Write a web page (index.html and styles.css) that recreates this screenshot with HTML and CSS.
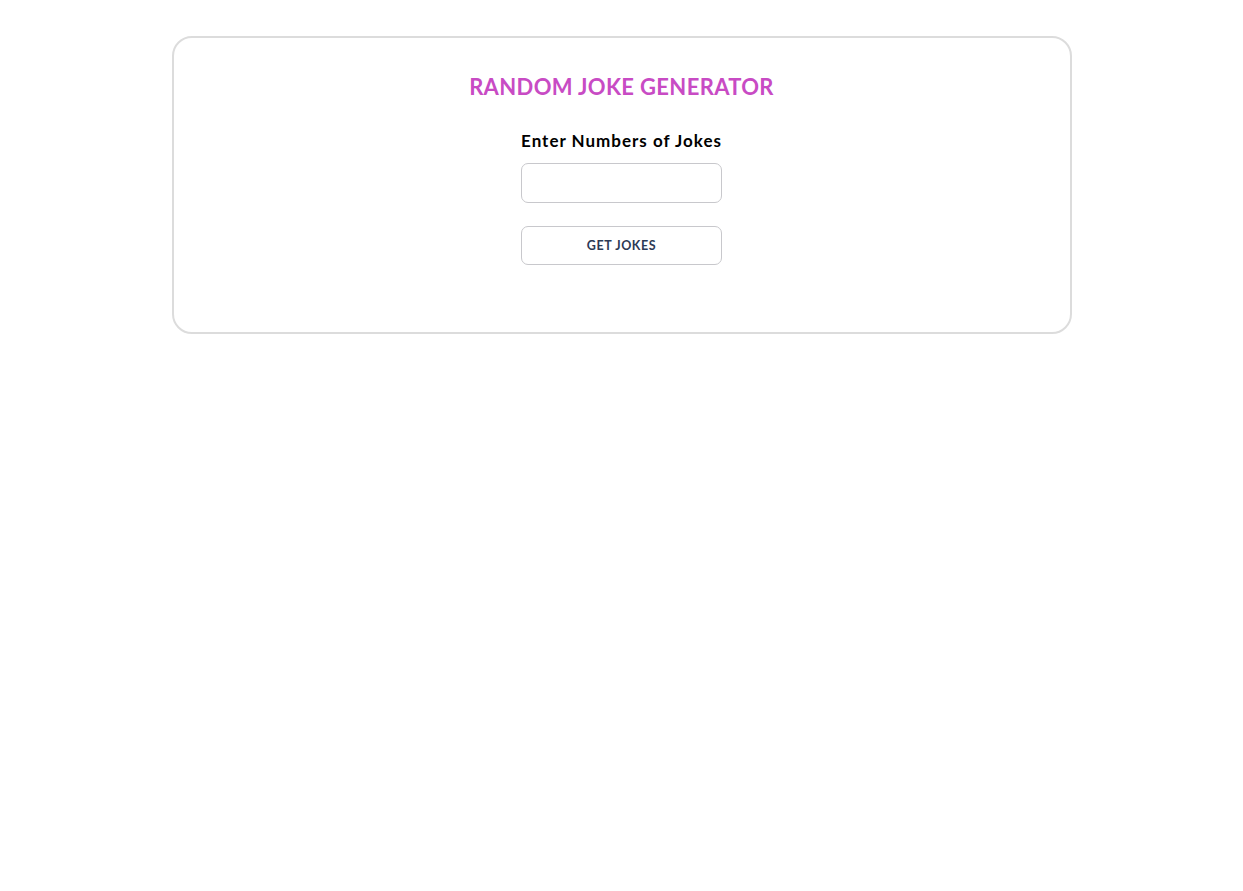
FILE: index.html
```html
<!DOCTYPE html>
<html lang="en">
<head>
<meta charset="utf-8">
<title>Random Joke Generator</title>
<link rel="stylesheet" href="styles.css">
</head>
<body>
<main class="card">
  <h1 class="title">RANDOM JOKE GENERATOR</h1>
  <form class="form">
    <label class="label" for="count">Enter Numbers of Jokes</label>
    <input class="input" id="count" type="number">
    <button class="button" type="button">GET JOKES</button>
  </form>
</main>
</body>
</html>
```
FILE: styles.css
```css
* { box-sizing: border-box; }
html, body { background: #fff; }
body {
  margin: 0;
  padding-top: 36px;
  font-family: Lato, "Liberation Sans", sans-serif;
}
.card {
  width: 900px;
  margin: 0 auto;
  height: 298px;
  border: 2px solid #dcdcdc;
  border-radius: 20px;
  padding-top: 35px;
  display: flex;
  flex-direction: column;
  align-items: center;
}
.title {
  margin: 0;
  font-size: 22px;
  line-height: 28px;
  font-weight: 700;
  color: #c84bc4;
  letter-spacing: 0.35px;
}
.form {
  margin-top: 29px;
  width: 201px;
  display: flex;
  flex-direction: column;
  align-items: stretch;
}
.label {
  font-size: 17px;
  font-weight: 700;
  color: #000;
  text-align: center;
  line-height: 22px;
  letter-spacing: 1px;
  white-space: nowrap;
}
.input {
  margin-top: 11px;
  height: 40px;
  border: 1px solid #c8c8cc;
  border-radius: 7px;
  background: #fff;
  font: inherit;
  padding: 0 10px;
}
.button {
  margin-top: 23px;
  height: 39px;
  border: 1px solid #c8c8cc;
  border-radius: 7px;
  background: #fff;
  font-family: inherit;
  font-size: 12.5px;
  font-weight: 700;
  color: #2c3a55;
  letter-spacing: 0.6px;
}
```
